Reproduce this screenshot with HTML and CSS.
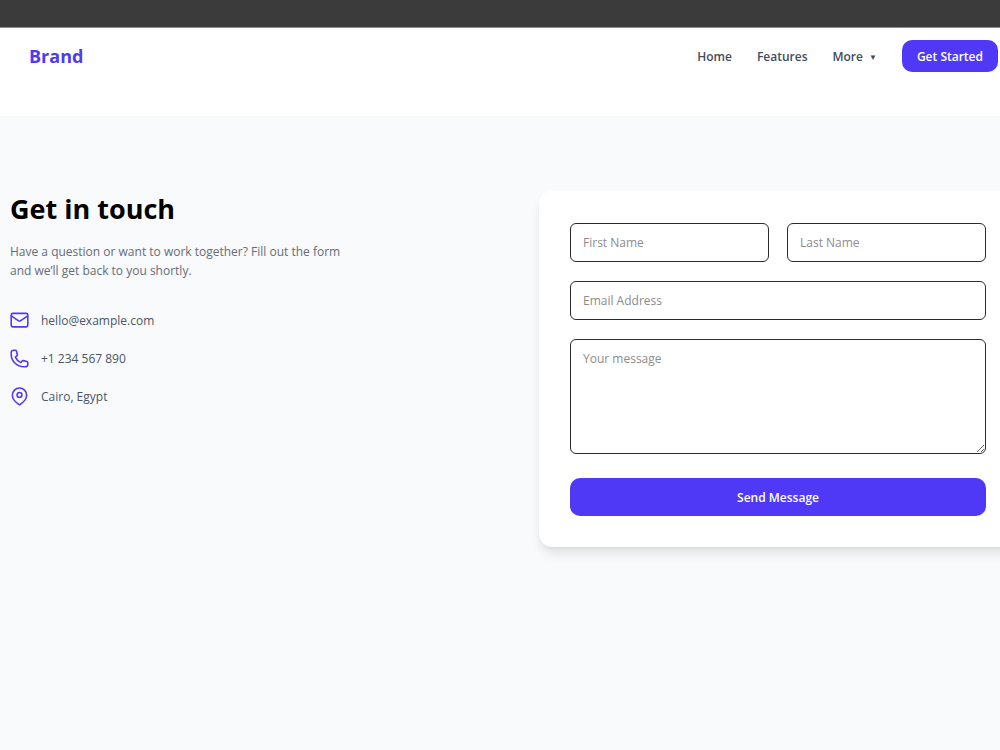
FILE: index.html
```html
<!DOCTYPE html>
<html lang="en">
<head>
    <meta charset="UTF-8">
    <meta name="viewport" content="width=device-width, initial-scale=1.0">
    <title>Contact</title>
    <link rel="stylesheet" href="styles.css">
</head>
<body>
    <div class="topbar"></div>
    <header class="header">
        <a href="#" class="brand">Brand</a>
        <nav class="nav">
            <a href="#">Home</a>
            <a href="#">Features</a>
            <button type="button" class="nav-more">More <span class="caret">▼</span></button>
            <button type="button" class="nav-cta">Get Started</button>
        </nav>
    </header>
    <main class="contact">
        <section class="info">
            <h1>Get in touch</h1>
            <p>Have a question or want to work together? Fill out the form and we’ll get back to you shortly.</p>
            <ul class="info-list">
                <li>
                    <svg viewBox="0 0 24 24"><rect x="1.500" y="3" width="21" height="17" rx="2"/><path d="M2 6.500l8.500 5.700a2.700 2.700 0 0 0 3 0L22 6.500"/></svg>
                    <span>hello@example.com</span>
                </li>
                <li>
                    <svg viewBox="0 0 24 24"><path d="M1.500 4.500a3 3 0 0 1 3-3h2.200c.6 0 1.200.4 1.400 1.100l1.200 4.600c.1.600-.1 1.200-.6 1.500l-1.900 1.500a13 13 0 0 0 7 7l1.500-1.900c.3-.5.9-.7 1.500-.6l4.600 1.200c.7.200 1.100.8 1.100 1.400v2.200a3 3 0 0 1-3 3h-2C8.800 22.500 1.500 15.200 1.500 6.500z"/></svg>
                    <span>+1 234 567 890</span>
                </li>
                <li>
                    <svg viewBox="0 0 24 24"><circle cx="12" cy="10" r="3"/><path d="M21 10.300C21 17 12 22.500 12 22.500S3 17 3 10.300a9 9 0 0 1 18 0z"/></svg>
                    <span>Cairo, Egypt</span>
                </li>
            </ul>
        </section>
        <form class="card">
            <div class="row">
                <input type="text" placeholder="First Name" aria-label="First Name">
                <input type="text" placeholder="Last Name" aria-label="Last Name">
            </div>
            <input type="email" placeholder="Email Address" aria-label="Email Address">
            <textarea placeholder="Your message" aria-label="Your message"></textarea>
            <button type="submit">Send Message</button>
        </form>
    </main>
</body>
</html>
```
FILE: styles.css
```css
* {
    box-sizing: border-box;
}
body {
    margin: 0;
    min-height: 100vh;
    overflow-x: hidden;
    display: flex;
    flex-direction: column;
    font-family: "Segoe UI", "Open Sans", sans-serif;
    font-size: 12px;
    line-height: 19px;
    color: #4a5565;
    background-color: #f9fafc;
}
button, input, textarea {
    font-family: inherit;
    font-size: inherit;
    line-height: inherit;
}
button {
    cursor: pointer;
}
.topbar {
    height: 28px;
    background-color: #3b3b3b;
    border-bottom: 1px solid #8c8c8c;
}
.header {
    display: flex;
    justify-content: space-between;
    align-items: center;
    padding: 12px 2px 44px 29px;
    background-color: #fff;
}
.brand {
    font-size: 18px;
    font-weight: bold;
    color: #4f39f6;
    text-decoration: none;
}
.nav {
    display: flex;
    align-items: center;
    gap: 25px;
    font-weight: 600;
}
.nav a, .nav-more {
    color: #414c5b;
    text-decoration: none;
}
.nav-more {
    display: flex;
    align-items: center;
    gap: 6px;
    padding: 0;
    border: none;
    background: none;
    font-weight: 600;
}
.caret {
    font-size: 8px;
}
.nav-cta {
    height: 32px;
    padding: 0 15px;
    border: none;
    border-radius: 10px;
    background-color: #4f39f6;
    color: #fff;
    font-weight: 600;
}
/* the grid runs slightly past the right edge of the window */
.contact {
    display: grid;
    grid-template-columns: 1fr 1fr;
    gap: 51px;
    align-items: start;
    margin-right: -17px;
    padding: 75px 0 75px 10px;
}
.info h1 {
    margin: 0 0 15px;
    font-size: 27px;
    line-height: 36px;
    font-weight: bold;
    color: #000;
}
.info p {
    max-width: 353px;
    margin: 0 0 31px;
    color: #646c79;
}
.info-list {
    display: flex;
    flex-direction: column;
    gap: 19px;
    margin: 0;
    padding: 0;
    list-style: none;
}
.info-list li {
    display: flex;
    align-items: center;
    gap: 12px;
}
.info-list svg {
    width: 19px;
    height: 19px;
    fill: none;
    stroke: #4f39f6;
    stroke-width: 2;
    stroke-linecap: round;
    stroke-linejoin: round;
}
.card {
    display: flex;
    flex-direction: column;
    gap: 19px;
    padding: 32px 31px 31px;
    border-radius: 13px;
    background-color: #fff;
    box-shadow: 0 8px 12px -2px rgba(0, 0, 0, 0.1), 0 3px 5px -3px rgba(0, 0, 0, 0.1);
}
.row {
    display: grid;
    grid-template-columns: 1fr 1fr;
    gap: 18px;
}
.card input, .card textarea {
    width: 100%;
    padding: 9px 12px;
    border: 1px solid #2b2b2b;
    border-radius: 6px;
    background-color: #fff;
    color: #1e2939;
}
.card input {
    height: 39px;
}
.card textarea {
    height: 115px;
    resize: vertical;
}
.card ::placeholder {
    color: #8c8c8c;
}
.card button {
    height: 38px;
    margin-top: 5px;
    border: none;
    border-radius: 10px;
    background-color: #4f39f6;
    color: #fff;
    font-weight: 600;
}
```
